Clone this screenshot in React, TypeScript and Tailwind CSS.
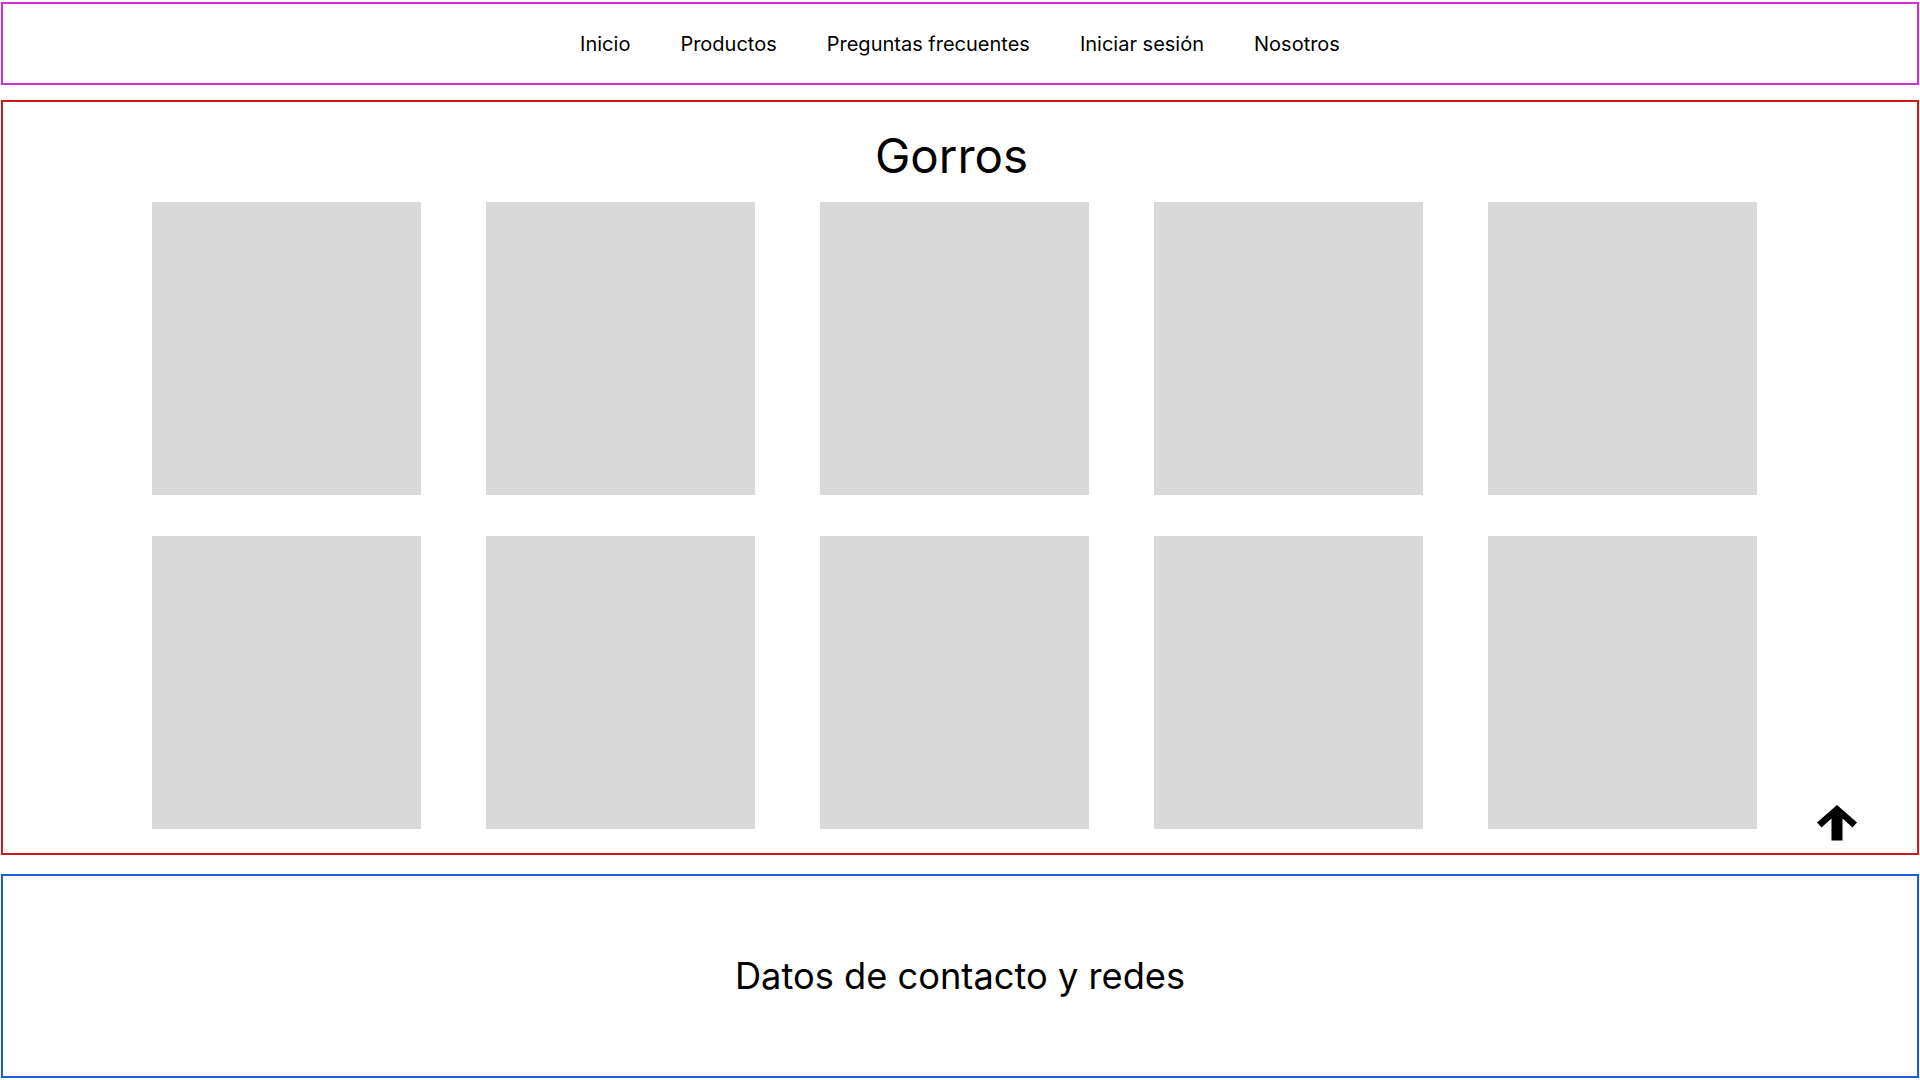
import React from "react";

const navLinks = ["Inicio", "Productos", "Preguntas frecuentes", "Iniciar sesión", "Nosotros"];

const products = Array.from({ length: 10 }, (_, i) => i);

function ArrowUp() {
  return (
    <svg width="40" height="36" viewBox="0 0 40 36" fill="currentColor">
      <polygon points="20,0 40,17.5 35.5,22.5 25.5,13.5 25.5,35.5 14.5,35.5 14.5,13.5 4.5,22.5 0,17.5" />
    </svg>
  );
}

export default function App() {
  return (
    <div className="min-h-screen bg-white pt-[2px] text-black" style={{ fontFamily: "Inter, 'Noto Sans', sans-serif" }}>
      {/* Header nav */}
      <nav className="mx-px h-[83px] border-2 border-[#d22fd2] flex items-center justify-center gap-[50px] text-[20px]">
        {navLinks.map((link) => (
          <a key={link} href="#" className="leading-none">
            {link}
          </a>
        ))}
      </nav>

      {/* Products */}
      <main className="relative mx-px mt-[15px] border-2 border-[#cc1a1a] pt-[25px] pb-[24px]">
        <h1 className="pr-[17px] text-center text-[47.5px] leading-[58px] font-normal">Gorros</h1>
        <div className="mt-[17px] pl-[149px] grid grid-cols-[repeat(5,269px)] gap-x-[65px] gap-y-[41px]">
          {products.map((p) => (
            <div key={p} className="h-[293px] bg-[#d9d9d9]" />
          ))}
        </div>
        <button className="absolute right-[60px] bottom-[12px] text-black" aria-label="Volver arriba">
          <ArrowUp />
        </button>
      </main>

      {/* Footer */}
      <footer className="mx-px mt-[19px] h-[204px] border-2 border-[#1a5ae0] flex items-center justify-center">
        <p className="text-[36.25px] leading-none">Datos de contacto y redes</p>
      </footer>
    </div>
  );
}
